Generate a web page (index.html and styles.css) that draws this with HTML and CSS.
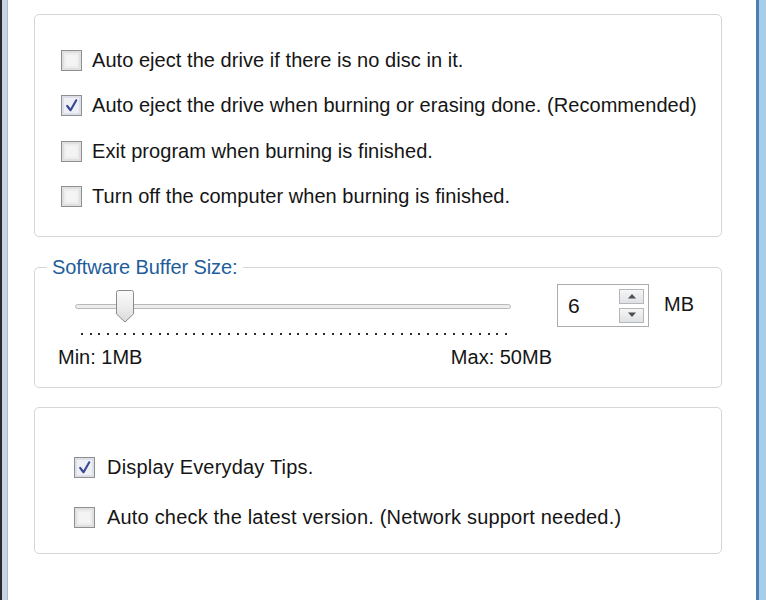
FILE: index.html
```html
<!DOCTYPE html>
<html>
<head>
<meta charset="utf-8">
<link rel="stylesheet" href="styles.css">
</head>
<body>
<div class="window">
  <div class="frame-left"></div>
  <div class="content">
    <div class="group g1">
      <label class="row"><span class="cb"></span><span class="txt">Auto eject the drive if there is no disc in it.</span></label>
      <label class="row"><span class="cb checked"><svg viewBox="0 0 20 20" class="tick"><path d="M5.5 10.5 L9 15 L15 4.5" /></svg></span><span class="txt">Auto eject the drive when burning or erasing done. (Recommended)</span></label>
      <label class="row"><span class="cb"></span><span class="txt">Exit program when burning is finished.</span></label>
      <label class="row"><span class="cb"></span><span class="txt">Turn off the computer when burning is finished.</span></label>
    </div>

    <div class="group g2">
      <span class="legend">Software Buffer Size:</span>
      <div class="slider-col">
        <div class="slider">
          <div class="track"></div>
          <svg class="thumb" viewBox="0 0 20 33"><defs><linearGradient id="tg" x1="0" y1="0" x2="0" y2="1"><stop offset="0" stop-color="#fbfbfb"/><stop offset="0.55" stop-color="#ececec"/><stop offset="1" stop-color="#d9d9d9"/></linearGradient></defs><path d="M1.5 2.5 Q1.5 0.5 3.5 0.5 L16.5 0.5 Q18.5 0.5 18.5 2.5 L18.5 24 L10 32 L1.5 24 Z" fill="url(#tg)" stroke="#8a8a8a" stroke-width="1"/></svg>
        </div>
        <div class="ticks"></div>
        <div class="range"><span>Min: 1MB</span><span>Max: 50MB</span></div>
      </div>
      <div class="spin">
        <span class="spin-val">6</span>
        <div class="spin-btns">
          <span class="sb"><svg viewBox="0 0 10 6"><path d="M1 5.5 L5 1 L9 5.5 Z"/></svg></span>
          <span class="sb"><svg viewBox="0 0 10 6"><path d="M1 0.5 L5 5 L9 0.5 Z"/></svg></span>
        </div>
      </div>
      <span class="unit">MB</span>
    </div>

    <div class="group g3">
      <label class="row"><span class="cb checked"><svg viewBox="0 0 20 20" class="tick"><path d="M5.5 10.5 L9 15 L15 4.5" /></svg></span><span class="txt">Display Everyday Tips.</span></label>
      <label class="row"><span class="cb"></span><span class="txt">Auto check the latest version. (Network support needed.)</span></label>
    </div>
  </div>
  <div class="frame-right"></div>
</div>
</body>
</html>
```

FILE: styles.css
```css
html, body {
  margin: 0;
  padding: 0;
  background: #ffffff;
}
body {
  font-family: "Liberation Sans", Arial, sans-serif;
  color: #151515;
}
.window {
  display: flex;
  width: 766px;
  height: 600px;
  overflow: hidden;
}
.frame-left {
  width: 8px;
  flex: none;
  border-left: 2px solid #2b2b2b;
  background: #c9d5e6;
  box-sizing: border-box;
  box-shadow: inset -1px 0 0 #b0bccc;
}
.frame-right {
  width: 10px;
  flex: none;
  border-left: 3px solid #4c7fae;
  background: #a6cdec;
  box-sizing: border-box;
}
.content {
  flex: 1;
  padding: 14px 0 0 26px;
  display: flex;
  flex-direction: column;
}
.group {
  width: 688px;
  box-sizing: border-box;
  border: 1px solid #d3d7da;
  border-radius: 5px;
  position: relative;
}
.g1 {
  height: 223px;
  padding: 34px 0 0 26px;
  display: flex;
  flex-direction: column;
  gap: 23.5px;
}
.row {
  display: flex;
  align-items: center;
  height: 22px;
}
.cb {
  width: 21px;
  height: 21px;
  box-sizing: border-box;
  border: 1px solid #8e8f8f;
  background: #f4f4f4;
  box-shadow: inset 0 0 0 2px #e0e0e0, inset 0 0 0 4px #ededed;
  flex: none;
  position: relative;
}
.cb.checked {
  background: #eef0f6;
  box-shadow: inset 0 0 0 2px #dcdfea;
}
.tick {
  position: absolute;
  left: 0;
  top: 0;
  width: 19px;
  height: 19px;
}
.tick path {
  fill: none;
  stroke: #3b4a93;
  stroke-width: 2.3;
  stroke-linecap: round;
  stroke-linejoin: round;
}
.txt {
  margin-left: 10px;
  font-size: 20px;
  letter-spacing: 0.05px;
  white-space: nowrap;
}
.g2 {
  margin-top: 30px;
  height: 121px;
  padding: 16px 0 0 23px;
  display: flex;
  align-items: flex-start;
}
.legend {
  position: absolute;
  left: 12px;
  top: -12px;
  padding: 0 6px 0 5px;
  background: #ffffff;
  color: #1f5d9a;
  font-size: 20px;
  letter-spacing: -0.1px;
  line-height: 22px;
}
.slider-col {
  width: 497px;
  padding-top: 6px;
  flex: none;
}
.slider {
  position: relative;
  height: 33px;
}
.track {
  position: absolute;
  left: 17px;
  top: 14px;
  width: 436px;
  height: 5px;
  box-sizing: border-box;
  border: 1px solid #b9b9b9;
  border-radius: 3px;
  background: #ededed;
}
.thumb {
  position: absolute;
  left: 57px;
  top: 0;
  width: 20px;
  height: 33px;
}
.ticks {
  margin: 10px 0 0 23px;
  width: 426px;
  height: 2px;
  background: repeating-linear-gradient(to right, #2a2a2a 0 2px, transparent 2px 8.65px);
}
.range {
  display: flex;
  justify-content: space-between;
  width: 494px;
  margin-top: 11px;
  font-size: 20px;
  line-height: 22px;
}
.spin {
  margin-left: 2px;
  width: 92px;
  height: 43px;
  box-sizing: border-box;
  border: 1px solid #acacac;
  display: flex;
  align-items: center;
  justify-content: space-between;
  padding: 0 4px 0 10px;
}
.spin-val {
  font-size: 21px;
}
.spin-btns {
  display: flex;
  flex-direction: column;
  gap: 4px;
}
.sb {
  width: 25px;
  height: 15px;
  box-sizing: border-box;
  border: 1px solid #b4b8bc;
  background: linear-gradient(#f6f6f6, #dfe1e3);
  display: flex;
  align-items: center;
  justify-content: center;
}
.sb svg {
  width: 10px;
  height: 6px;
}
.sb path {
  fill: #4b4f55;
}
.unit {
  margin-left: 15px;
  margin-top: 8px;
  font-size: 20px;
  line-height: 24px;
}
.g3 {
  margin-top: 19px;
  height: 147px;
  padding: 48px 0 0 39px;
  display: flex;
  flex-direction: column;
  gap: 28px;
}
.g3 .txt {
  margin-left: 12px;
  font-size: 20px;
  letter-spacing: 0.19px;
}
```
